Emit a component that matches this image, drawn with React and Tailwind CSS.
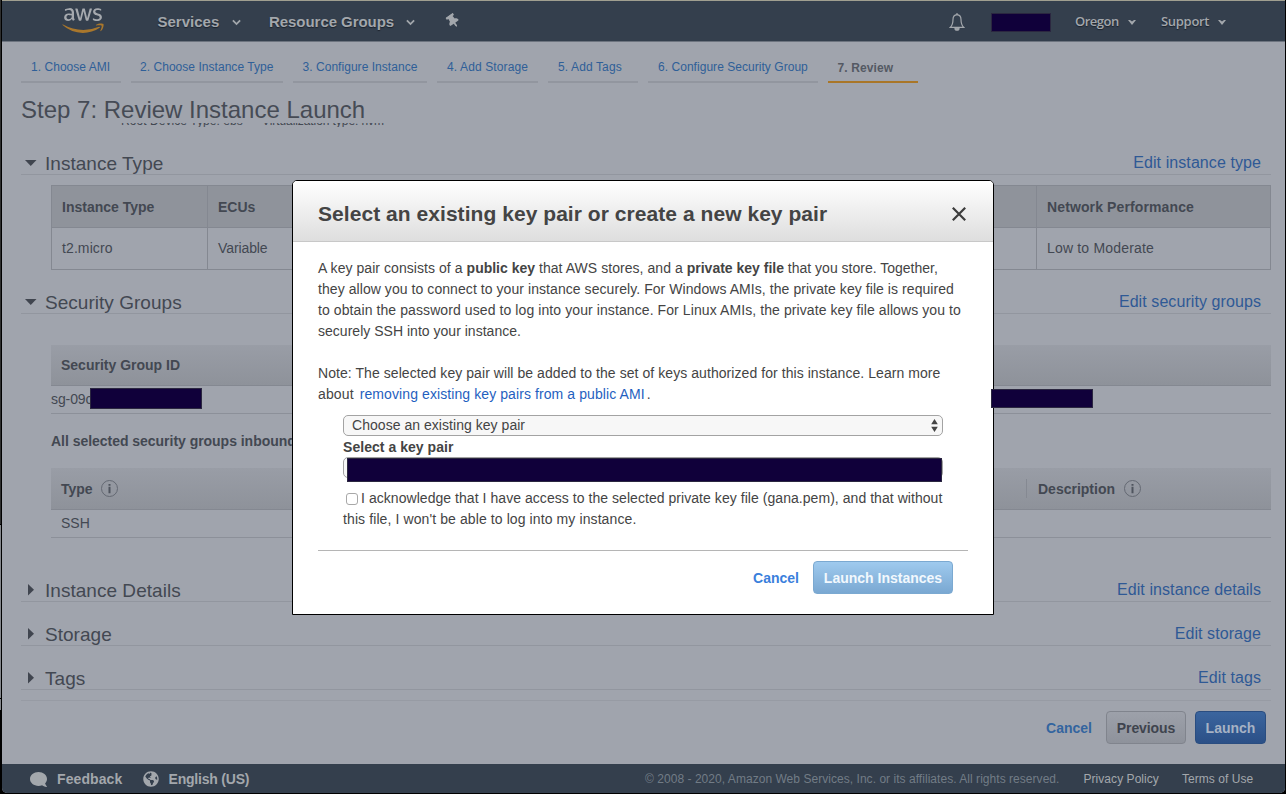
import React from "react";
import { FaAws, FaComment, FaGlobeAmericas, FaThumbtack } from "react-icons/fa";

function Chevron({ className }) {
  return (
    <svg viewBox="0 0 10 7" className={className} fill="none" stroke="currentColor" strokeWidth="2">
      <path d="M1 1.2 5 5.2 9 1.2" />
    </svg>
  );
}

function Caret() {
  return (
    <svg viewBox="0 0 8 5" className="h-[5px] w-[8px]" fill="currentColor">
      <path d="M0 0h2l2 1.500 2-1.500h2L4 5Z" />
    </svg>
  );
}

function Redacted({ className }) {
  return <div className={`border border-[#2b2740] bg-[#10003a] ${className}`} />;
}

function AwsLogo() {
  return (
    <div className="grid h-[33px] w-[42px]">
      <FaAws className="col-start-1 row-start-1 h-[33px] w-[42px] text-[#a5a9ae] [clip-path:inset(0_0_43%_0)]" />
      <FaAws className="col-start-1 row-start-1 h-[33px] w-[42px] text-[#a9772c] [clip-path:inset(57%_0_0_0)]" />
    </div>
  );
}

function NavBar() {
  return (
    <header className="flex h-[41px] shrink-0 items-center border-b border-[#6d747f] bg-[#343f4d] pt-[3px] text-[15px] font-bold text-[#a3a7ac] [text-shadow:0_1px_1px_#1b222c]">
      <div className="ml-[60px] w-[95.500px] pb-[4px]">
        <AwsLogo />
      </div>
      <div className="flex w-[111.500px] items-center">
        <span className="w-[74px]">Services</span>
        <Chevron className="h-[7px] w-[9px]" />
      </div>
      <div className="flex w-[177px] items-center">
        <span className="w-[137px] tracking-[-0.05px]">Resource Groups</span>
        <Chevron className="h-[7px] w-[9px]" />
      </div>
      <FaThumbtack className="mb-[3px] h-[14px] w-[14px] -rotate-[35deg]" />
      <svg viewBox="0 0 16 18" className="mb-[2px] ml-[489px] h-[18px] w-[16px]" fill="none" stroke="currentColor" strokeWidth="1.2">
        <path d="M8 1.6C5.2 1.9 4 3.9 4 6.4c0 4.3-1.1 6.4-2.8 8h13.6c-1.7-1.6-2.8-3.7-2.8-8 0-2.500-1.200-4.500-4-4.800Z" />
        <path d="M8 0v1.800" />
        <path d="M6 15.200a2 2 0 0 0 4 0Z" fill="currentColor" />
      </svg>
      <Redacted className="ml-[26px] h-[19px] w-[60px]" />
      <div className="ml-[24px] flex w-[86px] items-center pb-px font-['Open_Sans',sans-serif] text-[13px] font-semibold">
        <span className="w-[53px] tracking-[-0.5px]">Oregon</span>
        <Caret />
      </div>
      <div className="flex items-center pb-px font-['Open_Sans',sans-serif] text-[13px] font-semibold">
        <span className="w-[57px] tracking-[-0.3px]">Support</span>
        <Caret />
      </div>
    </header>
  );
}

const steps = [
  ["1. Choose AMI", "w-[100px] pl-[10px]"],
  ["2. Choose Instance Type", "w-[152px] pl-[9px]"],
  ["3. Configure Instance", "w-[134px] pl-[9.500px]"],
  ["4. Add Storage", "w-[101px] pl-[10px] tracking-[0.12px]"],
  ["5. Add Tags", "w-[90px] pl-[10px] tracking-[0.12px]"],
  ["6. Configure Security Group", "w-[170px] pl-[10px]"],
];

function Steps() {
  return (
    <nav className="ml-[19px] flex h-[41px] shrink-0 gap-[10px] text-[12px] leading-[50px] tracking-[0.04px] text-[#2f5f98]">
      {steps.map(([label, look]) => (
        <div key={label} className={`border-b-2 border-[#92969f] whitespace-nowrap ${look}`}>{label}</div>
      ))}
      <div className="w-[90px] border-b-2 border-[#a97628] pl-[9.500px] leading-[52px] font-bold tracking-[0.1px] text-[#545963]">7. Review</div>
    </nav>
  );
}

function Section({ title, link, open, className }) {
  return (
    <div className={`flex h-6 w-[1250px] shrink-0 items-center border-b border-[#92969f] ${className}`}>
      <svg viewBox="0 0 12 12" className="ml-[4px] h-[12px] w-[12px]" fill="#40454f">
        {open ? <path d="M0 3h11.500L5.750 9Z" /> : <path d="M3 0v11.500L9 5.750Z" />}
      </svg>
      <h2 className="ml-[8px] pt-[2px] text-[19px] leading-[23px] tracking-[0.03px]">{title}</h2>
      <a className="mr-[10px] ml-auto text-[16px] leading-[22px] tracking-[0.08px] text-[#2f5995]">{link}</a>
    </div>
  );
}

function Info() {
  return (
    <svg viewBox="0 0 17 17" className="ml-[9px] h-[17px] w-[17px]" fill="none">
      <circle cx="8.500" cy="8.500" r="8" stroke="#646973" strokeWidth="1" />
      <path d="M8.500 6.800v6.400M8.500 4v1.800" stroke="#4f545e" strokeWidth="2" />
    </svg>
  );
}

function Review() {
  return (
    <main className="flex flex-col pl-[19px] text-[14px] text-[#434852]">
      <h1 className="h-[40px] text-[24px] leading-[53px] text-[#464b55]">Step 7: Review Instance Launch</h1>
      <div className="h-[4px] overflow-hidden pl-[100px] text-[12px] leading-[16px] whitespace-nowrap">
        <div className="mt-[-10px] flex tracking-[0.06px]">
          <span className="w-[141px]">Root Device Type: ebs</span>
          <span className="tracking-[-0.08px]">Virtualization type: hvm</span>
        </div>
      </div>

      <Section className="mt-6" title="Instance Type" link="Edit instance type" open />
      <div className="mt-[10px] ml-[30px] w-[1220px] border-x border-b border-[#848891]">
        <div className="flex h-[42px] items-center border-t border-[#848891] bg-[#8f939b] pt-px font-bold">
          <span className="w-[155px] pl-[10px]">Instance Type</span>
          <span className="-my-px h-[42px] w-[829px] border-l border-[#848891] pl-[10px] leading-[43px]">ECUs</span>
          <span className="-my-px h-[42px] border-l border-[#848891] pl-[10px] leading-[43px] tracking-[0.12px]">Network Performance</span>
        </div>
        <div className="flex h-[42px] items-center border-t border-[#848891]">
          <span className="w-[155px] pl-[10px] tracking-[0.1px]">t2.micro</span>
          <span className="h-[41px] w-[829px] border-l border-[#848891] pl-[10px] leading-[41px] tracking-[-0.1px]">Variable</span>
          <span className="h-[41px] border-l border-[#848891] pl-[10px] leading-[41px] tracking-[0.18px]">Low to Moderate</span>
        </div>
      </div>

      <Section className="mt-5" title="Security Groups" link="Edit security groups" open />
      <div className="mt-[31px] ml-[30px] w-[1220px]">
        <div className="h-[41px] border-b border-[#848891] bg-linear-to-b from-[#999da6] to-[#8e929a] pl-[10px] leading-[40px] font-bold">Security Group ID</div>
        <div className="flex h-[28px] border-b border-[#8c9099] pt-[2px] leading-[23px]">
          <span className="whitespace-nowrap tracking-[-0.1px]">sg-09c</span>
          <Redacted className="relative -ml-[2px] h-[21px] w-[112px]" />
        </div>
        <div className="h-[54px] leading-[54px] font-bold tracking-[-0.03px]">All selected security groups inbound</div>
        <div className="flex h-[42px] items-center border-b border-[#848891] bg-linear-to-b from-[#999da6] to-[#8e929a] pl-[10px] font-bold">
          <span className="w-[31px] pt-px">Type</span>
          <Info />
          <span className="ml-[908px] h-[19px] border-l border-[#858992] pl-[11px] leading-[20px]">Description</span>
          <Info />
        </div>
        <div className="h-[28px] border-b border-[#8c9099] pl-[10px] leading-[27px]">SSH</div>
      </div>

      <Section className="mt-10" title="Instance Details" link="Edit instance details" />
      <Section className="mt-5" title="Storage" link="Edit storage" />
      <Section className="mt-5" title="Tags" link="Edit tags" />
      <div className="mt-[10px] flex w-[1250px] justify-end border-t border-[#979ba4] pt-[10px] pr-[5px] font-bold">
        <button className="mr-[14px] h-[33px] pt-[2px] text-[#33649f]">Cancel</button>
        <button className="mr-[9px] h-[33px] w-[80px] rounded border border-[#80848d] bg-linear-to-b from-[#9da1aa] to-[#8e929b] pt-[2px] tracking-[-0.1px] text-[#3f444e]">Previous</button>
        <button className="h-[33px] w-[71px] rounded border border-[#2a4d80] bg-linear-to-b from-[#3b659e] to-[#2b5087] pt-[2px] text-[#a6b2c4]">Launch</button>
      </div>
    </main>
  );
}

function Footer() {
  return (
    <footer className="mt-auto flex h-[29px] shrink-0 items-center rounded-b-[5px] bg-[#343f4d] pt-px text-[14px] font-bold text-[#a3a7ac]">
      <FaComment className="ml-[28px] h-[17px] w-[17px] -scale-x-100" />
      <span className="ml-[10px] w-[86px] tracking-[0.1px]">Feedback</span>
      <FaGlobeAmericas className="h-[16px] w-[16px]" />
      <span className="ml-[9.500px] w-[476.500px] tracking-[-0.2px]">English (US)</span>
      <div className="flex text-[12px] font-normal whitespace-nowrap">
        <span className="w-[438.500px] tracking-[0.04px] text-[#727c86]">© 2008 - 2020, Amazon Web Services, Inc. or its affiliates. All rights reserved.</span>
        <span className="w-[98.500px] tracking-[0.05px]">Privacy Policy</span>
        <span className="tracking-[0.04px]">Terms of Use</span>
      </div>
    </footer>
  );
}

function KeyPairDialog() {
  return (
    <section className="absolute top-[180px] left-[292px] flex h-[435px] w-[702px] flex-col rounded-t-[5px] border border-black bg-white text-[14px] leading-[21px] whitespace-nowrap text-[#444]">
      <div className="flex h-[61px] shrink-0 items-center rounded-t-[4px] border-b border-[#c8c8c8] bg-linear-to-b from-white to-[#dedede] pt-[6px] pr-[27px] pl-[25px]">
        <h2 className="pb-[2px] text-[21px] font-bold tracking-[0.05px]">Select an existing key pair or create a new key pair</h2>
        <svg viewBox="0 0 14 14" className="ml-auto h-[14px] w-[14px]" stroke="#3c3c3c" strokeWidth="2.200">
          <path d="M.8.8 13.200 13.200M13.200.8.8 13.200" />
        </svg>
      </div>
      <div className="flex flex-col pt-[16px] pl-[25px]">
        <p>
          <span className="tracking-[0.06px]">A key pair consists of a </span><b>public key</b><span className="tracking-[0.05px]"> that AWS stores, and a </span><b>private key file</b> that you store. Together,<br />
          <span className="tracking-[0.065px]">they allow you to connect to your instance securely. For Windows AMIs, the private key file is required</span><br />
          <span className="tracking-[0.09px]">to obtain the password used to log into your instance. For Linux AMIs, the private key file allows you to</span><br />
          <span className="tracking-[0.02px]">securely SSH into your instance.</span>
        </p>
        <p className="mt-[21px]">
          <span className="tracking-[0.063px]">Note: The selected key pair will be added to the set of keys authorized for this instance. Learn more</span><br />
          <span className="tracking-[0.14px]">about</span>
          <a className="mr-[2px] ml-[6px] tracking-[0.09px] text-[#1f5fc0]">removing existing key pairs from a public AMI</a>.
        </p>
        <div className="mt-[10px] ml-[25px] w-[600px]">
          <div className="flex h-[21px] items-center justify-between rounded-[5px] border border-[#a3a3a3] bg-[#f7f7f7] pr-[4px] pl-[8px]">
            <span className="leading-[19px] tracking-[0.04px]">Choose an existing key pair</span>
            <svg viewBox="0 0 7 13" className="h-[13px] w-[7px]" fill="#444"><path d="M3.500 0 6.800 5.300H.2ZM3.500 13 6.800 7.700H.2Z" /></svg>
          </div>
          <div className="h-[21px] pt-px font-bold tracking-[0.04px]">Select a key pair</div>
          <div className="h-[21px] rounded-[5px] border border-[#a3a3a3] bg-[#f7f7f7] pl-[2.500px]">
            <Redacted className="h-[24px] w-[595px]" />
          </div>
          <div className="mt-[10px]">
            <div className="flex items-center">
              <span className="mr-[3px] ml-[3px] h-[12px] w-[12px] rounded-[3px] border border-[#a8a8a8] bg-white" />
              <span className="tracking-[0.05px]">I acknowledge that I have access to the selected private key file (gana.pem), and that without</span>
            </div>
            <div className="tracking-[0.1px]">this file, I won't be able to log into my instance.</div>
          </div>
        </div>
        <div className="mt-[20px] flex w-[650px] items-center justify-end border-t border-[#b5b5b5] pt-[10px] pr-[15px] font-bold">
          <button className="mr-[14px] pt-[2px] text-[#3a7fdc]">Cancel</button>
          <button className="h-[33px] w-[140px] rounded border border-[#7ba9d1] bg-linear-to-b from-[#9fcaee] to-[#7aa8d2] pt-[2px] text-[#f2f8fd]">Launch Instances</button>
        </div>
      </div>
    </section>
  );
}

export default function App() {
  return (
    <div className="relative flex h-[794px] w-[1286px] overflow-hidden bg-black font-['Liberation_Sans',Arial,sans-serif]">
      <div className="flex w-[2px] shrink-0 flex-col pr-px">
        <div className="h-[524px] bg-[#2e2f2f]" />
        <div className="mt-px h-[173px] bg-[#85888d]" />
        <div className="mt-px h-[11px] bg-[#85888d]" />
      </div>
      <div className="flex h-[793px] w-[1283px] flex-col rounded-b-[5px] border-t border-[#a09f90] bg-[#a0a4ad]">
        <NavBar />
        <Steps />
        <Review />
        <Footer />
      </div>
      <KeyPairDialog />
      <Redacted className="absolute top-[389px] left-[991px] h-[19px] w-[102px]" />
    </div>
  );
}
